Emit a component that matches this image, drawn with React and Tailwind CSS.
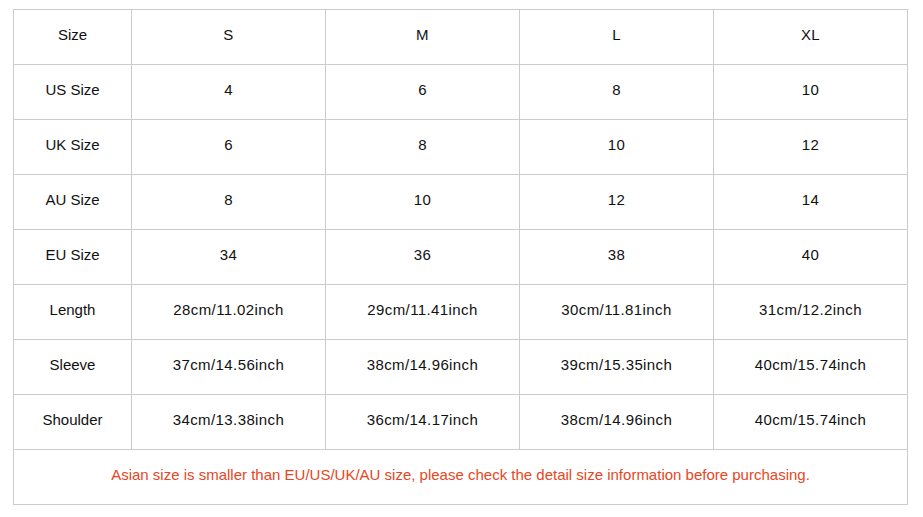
const columns = ['S', 'M', 'L', 'XL']

const rows = [
  ['Size', 'S', 'M', 'L', 'XL'],
  ['US Size', '4', '6', '8', '10'],
  ['UK Size', '6', '8', '10', '12'],
  ['AU Size', '8', '10', '12', '14'],
  ['EU Size', '34', '36', '38', '40'],
  ['Length', '28cm/11.02inch', '29cm/11.41inch', '30cm/11.81inch', '31cm/12.2inch'],
  ['Sleeve', '37cm/14.56inch', '38cm/14.96inch', '39cm/15.35inch', '40cm/15.74inch'],
  ['Shoulder', '34cm/13.38inch', '36cm/14.17inch', '38cm/14.96inch', '40cm/15.74inch'],
]

const App = () => {
  return (
    <div className="w-[923px] h-[517px] bg-white pl-[13px] pt-[9px]" style={{ fontFamily: '"Liberation Sans", Arial, sans-serif' }}>
      <table className="w-[895px] table-fixed border-collapse text-[15px] text-[#111]">
        <colgroup>
          <col className="w-[118px]" />
          {columns.map((c) => (
            <col key={c} className="w-[194px]" />
          ))}
        </colgroup>
        <tbody>
          {rows.map((row, i) => (
            <tr key={i} className="h-[55px]">
              {row.map((cell, j) => (
                <td
                  key={j}
                  className={`border border-[#cccccc] text-center align-middle p-0 pb-[3px] ${j > 0 ? 'tracking-[0.4px]' : ''}`}
                >
                  {cell}
                </td>
              ))}
            </tr>
          ))}
          <tr className="h-[55px]">
            <td colSpan={5} className="border border-[#cccccc] text-center align-middle text-[#e8461e] p-0 pb-[3px]">
              Asian size is smaller than EU/US/UK/AU size, please check the detail size information before purchasing.
            </td>
          </tr>
        </tbody>
      </table>
    </div>
  )
}

export default App
